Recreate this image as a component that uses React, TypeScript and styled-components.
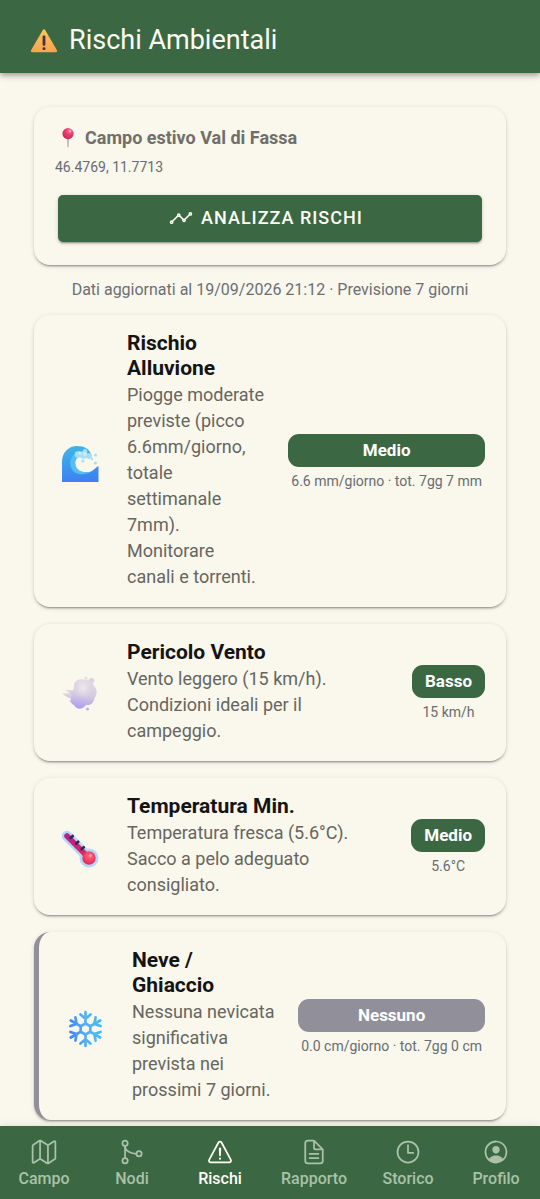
import React from "react";
import styled, { createGlobalStyle } from "styled-components";
import {
  IoAnalyticsOutline,
  IoDocumentTextOutline,
  IoGitMergeOutline,
  IoMapOutline,
  IoPersonCircleOutline,
  IoTimeOutline,
  IoWarningOutline,
} from "react-icons/io5";

const green = "#3b6843";
const cream = "#faf7ec";
const grey = "#91909a";

const GlobalStyle = createGlobalStyle`
  * { box-sizing: border-box; }
  body {
    margin: 0;
    background: ${cream};
    font-family: Roboto, "Liberation Sans", sans-serif;
    -webkit-font-smoothing: antialiased;
  }
  h1, h2, p { margin: 0; }
`;

const Shell = styled.div`
  display: flex;
  flex-direction: column;
  height: 100vh;
`;

const Header = styled.header`
  z-index: 1;
  display: flex;
  align-items: center;
  gap: 11px;
  padding: 25px 30px 17px;
  background: ${green};
  color: #fdfcf3;
  box-shadow: 0 2px 4px -1px rgba(0, 0, 0, 0.2), 0 4px 5px 0 rgba(0, 0, 0, 0.14),
    0 1px 10px 0 rgba(0, 0, 0, 0.12);
`;

const Title = styled.h1`
  font-size: 27px;
  line-height: 31px;
  font-weight: 400;
`;

const Content = styled.main`
  flex: 1;
  min-height: 0;
  overflow-y: auto;
  scrollbar-width: none;
  padding: 34px 34px 6px;
`;

const Card = styled.section`
  border-radius: 16px;
  background: ${cream};
  box-shadow: 0 3px 1px -2px rgba(0, 0, 0, 0.2), 0 2px 2px 0 rgba(0, 0, 0, 0.14),
    0 1px 5px 0 rgba(0, 0, 0, 0.12);
`;

const PlaceCard = styled(Card)`
  padding: 18px 21px 23px;
`;

const Place = styled.h2`
  display: flex;
  align-items: center;
  gap: 4px;
  color: #706f69;
  font-size: 18px;
  line-height: 26px;
  font-weight: 700;
`;

const Coordinates = styled.p`
  margin-top: 6px;
  color: #676d72;
  font-size: 14px;
  line-height: 20px;
`;

const AnalyzeButton = styled.button`
  display: flex;
  align-items: center;
  justify-content: center;
  gap: 8px;
  width: calc(100% - 6px);
  height: 47px;
  margin: 18px 3px 0;
  padding: 0 8px 2px 0;
  border: 0;
  border-radius: 5px;
  background: ${green};
  color: #fdfcf3;
  font-family: inherit;
  font-size: 18px;
  font-weight: 500;
  letter-spacing: 1px;
  text-transform: uppercase;
  box-shadow: 0 3px 1px -2px rgba(0, 0, 0, 0.2), 0 2px 2px 0 rgba(0, 0, 0, 0.14),
    0 1px 5px 0 rgba(0, 0, 0, 0.12);
`;

const Updated = styled.p`
  margin: 14px 0 15px;
  color: #6a7075;
  font-size: 16px;
  line-height: 21px;
  text-align: center;
`;

const RiskList = styled.div`
  display: flex;
  flex-direction: column;
  gap: 17px;
`;

const RiskCard = styled(Card)<{ $muted?: boolean }>`
  display: flex;
  align-items: center;
  padding: 16px 21px 17px 26px;
  border-left: ${(p) => (p.$muted ? `5px solid ${grey}` : "0")};
`;

const RiskIcon = styled.div`
  display: flex;
  flex: none;
  width: 67px;
  padding-top: 6px;
`;

const RiskBody = styled.div`
  flex: 1;
  min-width: 0;
  margin-right: 21px;
`;

const RiskTitle = styled.h2`
  color: #141414;
  font-size: 21px;
  line-height: 25px;
  font-weight: 700;
`;

const RiskText = styled.p`
  margin-top: 1px;
  color: #666660;
  font-size: 18px;
  line-height: 26px;
`;

const RiskLevel = styled.div`
  display: flex;
  flex: none;
  flex-direction: column;
  gap: 4px;
  padding-top: 3px;
  text-align: center;
`;

const Badge = styled.span<{ $muted?: boolean }>`
  padding: 6px 13px;
  border-radius: 11px;
  background: ${(p) => (p.$muted ? grey : green)};
  color: #fff;
  font-size: 17px;
  line-height: 21px;
  font-weight: 700;
`;

const Measure = styled.span`
  padding: 0 3px;
  color: #676d72;
  font-size: 14px;
  line-height: 20px;
`;

const TabBar = styled.nav`
  z-index: 1;
  display: flex;
  background: ${green};
  box-shadow: 0 2px 4px -1px rgba(0, 0, 0, 0.2), 0 4px 5px 0 rgba(0, 0, 0, 0.14),
    0 1px 10px 0 rgba(0, 0, 0, 0.12);
`;

const Tab = styled.a<{ $active?: boolean }>`
  display: flex;
  flex: 1;
  flex-direction: column;
  align-items: center;
  gap: 3px;
  padding: 12px 17px 10px;
  color: ${(p) => (p.$active ? "#fffef6" : "#a9c2a8")};
  font-size: 16px;
  line-height: 20px;
  font-weight: 500;
  text-decoration: none;
`;

const WarningArt = () => (
  <svg width="28" height="28" viewBox="0 0 28 28" aria-hidden="true">
    <defs>
      <linearGradient id="warn" x1="0" y1="0" x2="0" y2="1">
        <stop offset="0" stopColor="#f9c855" />
        <stop offset="1" stopColor="#f9a254" />
      </linearGradient>
    </defs>
    <path d="M12.7 3.3Q14 1.2 15.3 3.3L26.8 23Q27.8 25.2 25.5 25.3H2.5Q.3 25.2 1.2 23Z" fill="url(#warn)" />
    <rect x="12.6" y="8.4" width="2.8" height="10.4" rx="1" fill="#51303c" />
    <rect x="12.5" y="20.2" width="3" height="2.8" rx="1.2" fill="#51303c" />
  </svg>
);

const PinArt = () => (
  <svg width="26" height="26" viewBox="0 0 26 26" aria-hidden="true">
    <defs>
      <radialGradient id="pin" cx=".65" cy=".25" r=".8">
        <stop offset="0" stopColor="#ff7d95" />
        <stop offset=".4" stopColor="#f03c68" />
        <stop offset="1" stopColor="#c92562" />
      </radialGradient>
    </defs>
    <path d="M12.2 11h1.6l-.3 11q-.5.8-1 0z" fill="#b09ca8" />
    <circle cx="13" cy="8.6" r="5.6" fill="url(#pin)" />
    <circle cx="15" cy="6.3" r="1.1" fill="#ffc2cb" />
  </svg>
);

const WaveArt = () => (
  <svg width="40" height="40" viewBox="0 0 40 40" aria-hidden="true">
    <defs>
      <linearGradient id="wave" x1=".4" y1="0" x2=".5" y2="1">
        <stop offset="0" stopColor="#3fb6e8" />
        <stop offset=".55" stopColor="#3c97ee" />
        <stop offset="1" stopColor="#3f7ff2" />
      </linearGradient>
    </defs>
    <path d="M2 38V18C2 8 9 2 17 2c8 0 12 3 14 8l-5 2c-8-2-12 1-12 7 0 9 11 12 18 8 3-2 4-4 6.500-5V38Z" fill="url(#wave)" />
    <path d="M16 9c-7 4-8 15-1 19.500 5 3 12 2 16-1-8 2-15-1-15.500-7.500-.5-5 2.500-8 7.500-8z" fill="#55bff0" />
    <g fill="#a5dff7">
      <circle cx="18" cy="10.500" r="3.300" />
      <circle cx="23.500" cy="11" r="3.800" />
      <circle cx="29" cy="12" r="3" />
      <circle cx="25" cy="7.500" r="2.400" />
      <circle cx="23" cy="17" r="1.600" />
      <circle cx="35.500" cy="11" r="1.500" />
      <circle cx="32" cy="15" r="1.200" />
      <circle cx="35.500" cy="19" r="1.600" />
    </g>
    <circle cx="20" cy="9" r="1.800" fill="#c9edf9" />
    <circle cx="25" cy="10" r="2" fill="#c9edf9" />
  </svg>
);

const WindArt = () => (
  <svg width="40" height="40" viewBox="0 0 40 40" aria-hidden="true">
    <defs>
      <linearGradient id="wind" x1=".6" y1="0" x2=".45" y2="1">
        <stop offset="0" stopColor="#e2dce3" />
        <stop offset=".55" stopColor="#d3cae0" />
        <stop offset="1" stopColor="#b09cf2" />
      </linearGradient>
      <radialGradient id="puff" cx=".5" cy=".4" r=".55">
        <stop offset="0" stopColor="#efebee" />
        <stop offset="1" stopColor="#dfd8e3" stopOpacity="0" />
      </radialGradient>
    </defs>
    <g fill="url(#wind)">
      <path d="M2 18.500q6 .3 11-1.500l4 8q-4 2-8 1.500 2-.8 3-2.500-5-1.500-10-5.500Z" />
      <path d="M5 14.500q6 1.500 10 0v6Q9 18 5 14.500Z" />
      <path d="M14 13C13 7 18 3.500 23 4.500c6-.5 10 2 11 6.500 3.500 3 3.500 9 .5 12-.5 6-5 7.500-8.500 7-4 5.500-10 4.500-12 0-3-1-4-4-3-7Z" />
    </g>
    <ellipse cx="23" cy="15" rx="10" ry="10" fill="url(#puff)" />
    <circle cx="31.500" cy="5.500" r="2.800" fill="#ddd6e1" />
    <circle cx="26" cy="3" r="1.400" fill="#e2dce5" />
    <circle cx="27.500" cy="34" r="1.600" fill="#bfb0f1" />
  </svg>
);

const ThermometerArt = () => (
  <svg width="40" height="40" viewBox="0 0 40 40" aria-hidden="true">
    <defs>
      <linearGradient id="mercury" x1="0" y1="0" x2="1" y2="1">
        <stop offset="0" stopColor="#b3248c" />
        <stop offset="1" stopColor="#dc2861" />
      </linearGradient>
      <radialGradient id="bulb" cx=".55" cy=".35" r=".65">
        <stop offset="0" stopColor="#ff6d80" />
        <stop offset="1" stopColor="#e42452" />
      </radialGradient>
    </defs>
    <path d="M7 7 25 25" stroke="#b4d7fa" strokeWidth="10.500" strokeLinecap="round" />
    <circle cx="29" cy="29" r="9.500" fill="#b4d7fa" />
    <path d="M7 7 26 26" stroke="url(#mercury)" strokeWidth="5.500" strokeLinecap="round" />
    <circle cx="29" cy="29" r="6.700" fill="url(#bulb)" />
    <path d="m10.700 8.800 2-1.700M16.200 14.500l2-1.700M21.700 20l2-1.700" stroke="#35284f" strokeWidth="2.800" strokeLinecap="round" />
    <circle cx="30.500" cy="26.500" r="1.300" fill="#ffaab0" />
  </svg>
);

const SnowArt = () => (
  <svg width="40" height="40" viewBox="0 0 40 40" aria-hidden="true">
    <defs>
      <linearGradient id="snow" gradientUnits="userSpaceOnUse" x1="2" y1="22" x2="38" y2="18">
        <stop offset="0" stopColor="#3f7df3" />
        <stop offset=".5" stopColor="#55b1f3" />
        <stop offset="1" stopColor="#45bdf0" />
      </linearGradient>
      <mask id="flake" maskUnits="userSpaceOnUse" x="0" y="0" width="40" height="40">
        <g fill="none" stroke="#fff" strokeWidth="2.700" strokeLinecap="round" strokeLinejoin="round">
          <path d="m20.500 14.500 4.800 2.750v5.500l-4.800 2.750-4.800-2.750v-5.500Z" />
          {[0, 60, 120, 180, 240, 300].map((angle) => (
            <path key={angle} transform={`rotate(${angle} 20.5 20)`} d="M20.500 14V3M20.500 9.800l-5-4.300M20.500 9.800l5-4.300" />
          ))}
        </g>
      </mask>
    </defs>
    <rect width="40" height="40" fill="url(#snow)" mask="url(#flake)" />
  </svg>
);

const risks = [
  {
    Art: WaveArt,
    title: "Rischio Alluvione",
    text: "Piogge moderate previste (picco 6.6mm/giorno, totale settimanale 7mm). Monitorare canali\u00a0e torrenti.",
    level: "Medio",
    measure: "6.6 mm/giorno · tot. 7gg 7 mm",
  },
  {
    Art: WindArt,
    title: "Pericolo Vento",
    text: "Vento leggero (15 km/h). Condizioni ideali per il campeggio.",
    level: "Basso",
    measure: "15 km/h",
  },
  {
    Art: ThermometerArt,
    title: "Temperatura Min.",
    text: "Temperatura fresca (5.6°C). Sacco a pelo adeguato consigliato.",
    level: "Medio",
    measure: "5.6°C",
  },
  {
    Art: SnowArt,
    title: "Neve / Ghiaccio",
    text: "Nessuna nevicata significativa prevista nei prossimi 7 giorni.",
    level: "Nessuno",
    measure: "0.0 cm/giorno · tot. 7gg 0 cm",
    muted: true,
  },
];

const tabs = [
  { Icon: IoMapOutline, label: "Campo", href: "#campo" },
  { Icon: IoGitMergeOutline, label: "Nodi", href: "#nodi" },
  { Icon: IoWarningOutline, label: "Rischi", href: "#rischi", active: true },
  { Icon: IoDocumentTextOutline, label: "Rapporto", href: "#rapporto" },
  { Icon: IoTimeOutline, label: "Storico", href: "#storico" },
  { Icon: IoPersonCircleOutline, label: "Profilo", href: "#profilo" },
];

export default function App() {
  return (
    <Shell>
      <GlobalStyle />
      <Header>
        <WarningArt />
        <Title>Rischi Ambientali</Title>
      </Header>
      <Content>
        <PlaceCard>
          <Place>
            <PinArt />
            Campo estivo Val di Fassa
          </Place>
          <Coordinates>46.4769, 11.7713</Coordinates>
          <AnalyzeButton type="button">
            <IoAnalyticsOutline size={24} aria-hidden="true" />
            Analizza rischi
          </AnalyzeButton>
        </PlaceCard>
        <Updated>Dati aggiornati al 19/09/2026 21:12 · Previsione 7 giorni</Updated>
        <RiskList>
          {risks.map(({ Art, title, text, level, measure, muted }) => (
            <RiskCard key={title} $muted={muted}>
              <RiskIcon>
                <Art />
              </RiskIcon>
              <RiskBody>
                <RiskTitle>{title}</RiskTitle>
                <RiskText>{text}</RiskText>
              </RiskBody>
              <RiskLevel>
                <Badge $muted={muted}>{level}</Badge>
                <Measure>{measure}</Measure>
              </RiskLevel>
            </RiskCard>
          ))}
        </RiskList>
      </Content>
      <TabBar>
        {tabs.map(({ Icon, label, href, active }) => (
          <Tab key={label} href={href} $active={active} aria-current={active ? "page" : undefined}>
            <Icon size={28} aria-hidden="true" />
            {label}
          </Tab>
        ))}
      </TabBar>
    </Shell>
  );
}
